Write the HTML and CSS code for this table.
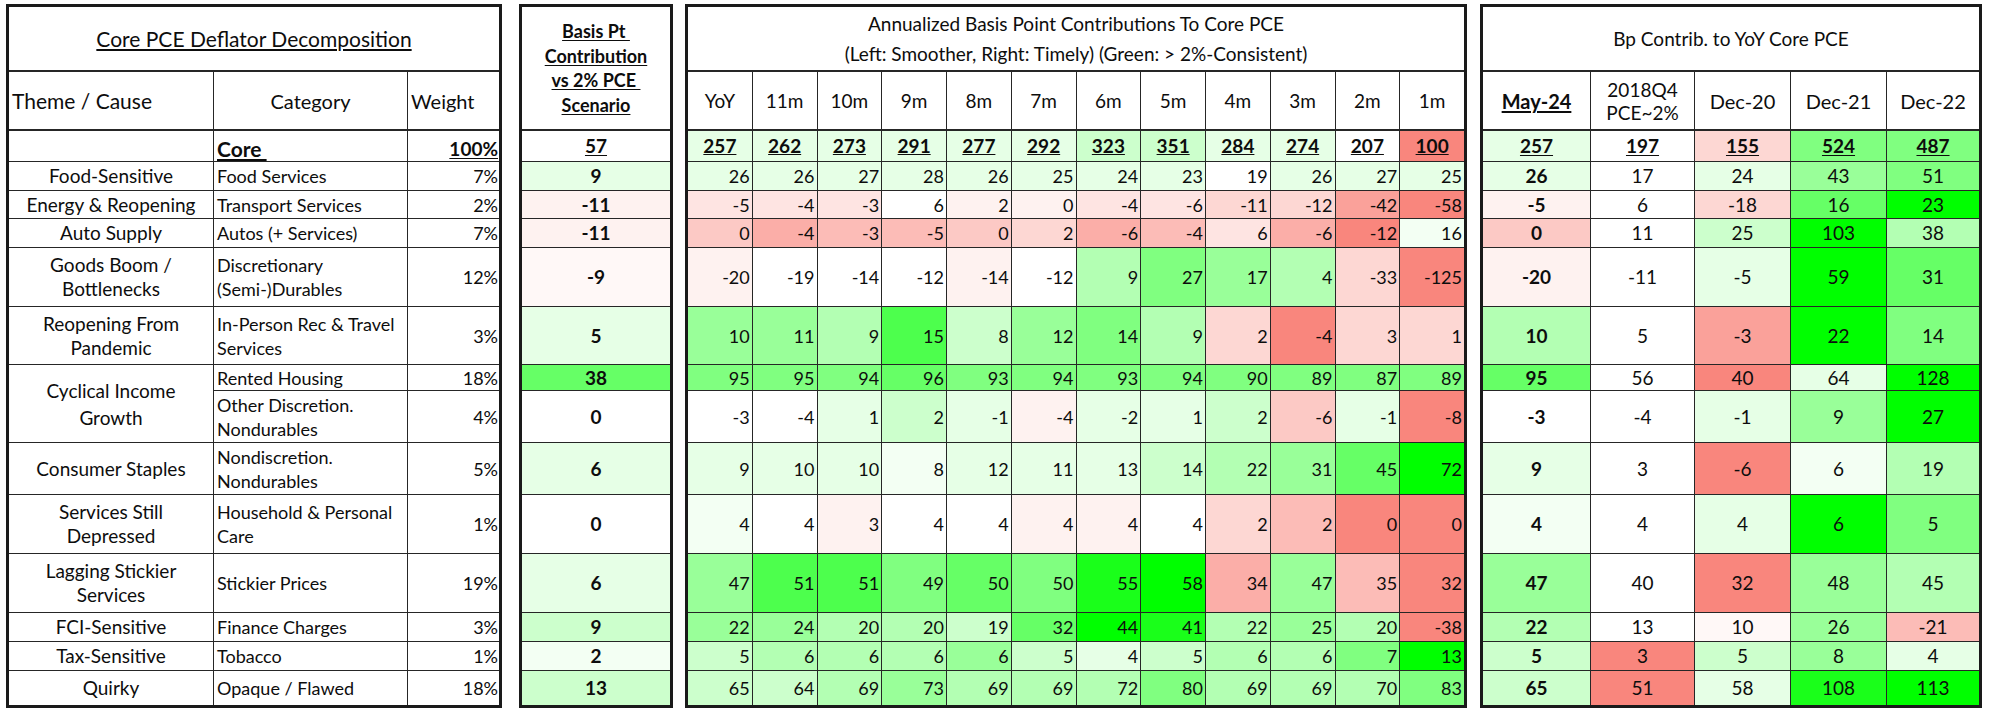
FILE: index.html
```html
<!DOCTYPE html>
<html lang="en">
<head>
<meta charset="utf-8">
<title>Core PCE Deflator Decomposition</title>
<link rel="stylesheet" href="styles.css">
</head>
<body>
<div class="page">

  <div class="t t1">
    <div class="ttl u">Core PCE Deflator Decomposition</div>
    <div class="hd lft big">Theme / Cause</div>
    <div class="hd ctr">Category</div>
    <div class="hd lft">Weight</div>

    <div></div>
    <div class="cat corecat"><span class="b u">Core&nbsp;</span></div>
    <div class="wt b u corewt">100%</div>

    <div class="th">Food-Sensitive</div><div class="cat">Food Services</div><div class="wt">7%</div>
    <div class="th">Energy &amp; Reopening</div><div class="cat">Transport Services</div><div class="wt">2%</div>
    <div class="th">Auto Supply</div><div class="cat">Autos (+ Services)</div><div class="wt">7%</div>
    <div class="th">Goods Boom /<br>Bottlenecks</div><div class="cat">Discretionary<br>(Semi-)Durables</div><div class="wt">12%</div>
    <div class="th">Reopening From<br>Pandemic</div><div class="cat">In-Person Rec &amp; Travel<br>Services</div><div class="wt">3%</div>
    <div class="th span2">Cyclical Income<br>Growth</div><div class="cat">Rented Housing</div><div class="wt">18%</div>
    <div class="cat">Other Discretion.<br>Nondurables</div><div class="wt">4%</div>
    <div class="th">Consumer Staples</div><div class="cat">Nondiscretion.<br>Nondurables</div><div class="wt">5%</div>
    <div class="th">Services Still<br>Depressed</div><div class="cat">Household &amp; Personal<br>Care</div><div class="wt">1%</div>
    <div class="th">Lagging Stickier<br>Services</div><div class="cat">Stickier Prices</div><div class="wt">19%</div>
    <div class="th">FCI-Sensitive</div><div class="cat">Finance Charges</div><div class="wt">3%</div>
    <div class="th">Tax-Sensitive</div><div class="cat">Tobacco</div><div class="wt">1%</div>
    <div class="th">Quirky</div><div class="cat">Opaque / Flawed</div><div class="wt">18%</div>
  </div>

  <div class="t t2">
    <div class="bphd b"><div class="stack"><span class="u">Basis Pt&nbsp;</span><br><span class="u">Contribution</span><br><span class="u">vs 2% PCE&nbsp;</span><br><span class="u">Scenario</span></div></div>
    <div class="bp u">57</div>
    <div class="bp g1">9</div>
    <div class="bp r1">-11</div>
    <div class="bp r1">-11</div>
    <div class="bp r0">-9</div>
    <div class="bp g1">5</div>
    <div class="bp g6">38</div>
    <div class="bp">0</div>
    <div class="bp g1">6</div>
    <div class="bp">0</div>
    <div class="bp g1">6</div>
    <div class="bp g2">9</div>
    <div class="bp g0">2</div>
    <div class="bp g2">13</div>
  </div>

  <div class="t t3">
    <div class="ttl3">Annualized Basis Point Contributions To Core PCE<br>(Left: Smoother, Right: Timely) (Green: &gt; 2%-Consistent)</div>
    <div class="hd ctr">YoY</div><div class="hd ctr">11m</div><div class="hd ctr">10m</div><div class="hd ctr">9m</div><div class="hd ctr">8m</div><div class="hd ctr">7m</div><div class="hd ctr">6m</div><div class="hd ctr">5m</div><div class="hd ctr">4m</div><div class="hd ctr">3m</div><div class="hd ctr">2m</div><div class="hd ctr">1m</div>

    <div class="cn g1"><span>257</span></div><div class="cn g1"><span>262</span></div><div class="cn g1"><span>273</span></div><div class="cn g1"><span>291</span></div><div class="cn g1"><span>277</span></div><div class="cn g1"><span>292</span></div><div class="cn g2"><span>323</span></div><div class="cn g2"><span>351</span></div><div class="cn g1"><span>284</span></div><div class="cn g1"><span>274</span></div><div class="cn"><span>207</span></div><div class="cn r9"><span>100</span></div>

    <div class="g1">26</div><div class="g1">26</div><div class="g1">27</div><div class="g1">28</div><div class="g1">26</div><div class="g1">25</div><div class="g1">24</div><div class="g1">23</div><div>19</div><div class="g1">26</div><div class="g1">27</div><div class="g1">25</div>

    <div class="r2">-5</div><div class="r2">-4</div><div class="r2">-3</div><div>6</div><div class="r1">2</div><div class="r1">0</div><div class="r2">-4</div><div class="r2">-6</div><div class="r3">-11</div><div class="r3">-12</div><div class="r7">-42</div><div class="r9">-58</div>

    <div class="r4">0</div><div class="r6">-4</div><div class="r5">-3</div><div class="r5">-5</div><div class="r4">0</div><div class="r3">2</div><div class="r6">-6</div><div class="r5">-4</div><div class="r2">6</div><div class="r6">-6</div><div class="r9">-12</div><div class="g0">16</div>

    <div class="r1">-20</div><div>-19</div><div>-14</div><div>-12</div><div class="r1">-14</div><div>-12</div><div class="g3">9</div><div class="g5">27</div><div class="g4">17</div><div class="g3">4</div><div class="r3">-33</div><div class="r9">-125</div>

    <div class="g4">10</div><div class="g4">11</div><div class="g3">9</div><div class="g7">15</div><div class="g2">8</div><div class="g4">12</div><div class="g5">14</div><div class="g3">9</div><div class="r3">2</div><div class="r9">-4</div><div class="r3">3</div><div class="r3">1</div>

    <div class="g5">95</div><div class="g5">95</div><div class="g5">94</div><div class="g6">96</div><div class="g5">93</div><div class="g5">94</div><div class="g5">93</div><div class="g5">94</div><div class="g5">90</div><div class="g5">89</div><div class="g5">87</div><div class="g5">89</div>

    <div>-3</div><div>-4</div><div class="g1">1</div><div class="g2">2</div><div class="g1">-1</div><div class="r1">-4</div><div class="g1">-2</div><div class="g1">1</div><div class="g2">2</div><div class="r4">-6</div><div class="g1">-1</div><div class="r9">-8</div>

    <div class="g1">9</div><div class="g1">10</div><div class="g1">10</div><div class="g0">8</div><div class="g1">12</div><div class="g1">11</div><div class="g1">13</div><div class="g2">14</div><div class="g3">22</div><div class="g4">31</div><div class="g6">45</div><div class="g10">72</div>

    <div class="g0">4</div><div>4</div><div class="r1">3</div><div>4</div><div>4</div><div class="r1">4</div><div class="r1">4</div><div>4</div><div class="r3">2</div><div class="r5">2</div><div class="r9">0</div><div class="r9">0</div>

    <div class="g4">47</div><div class="g7">51</div><div class="g7">51</div><div class="g5">49</div><div class="g6">50</div><div class="g5">50</div><div class="g9">55</div><div class="g10">58</div><div class="r6">34</div><div class="g4">47</div><div class="r5">35</div><div class="r9">32</div>

    <div class="g4">22</div><div class="g4">24</div><div class="g3">20</div><div class="g3">20</div><div class="g2">19</div><div class="g6">32</div><div class="g10">44</div><div class="g9">41</div><div class="g3">22</div><div class="g4">25</div><div class="g3">20</div><div class="r9">-38</div>

    <div class="g2">5</div><div class="g3">6</div><div class="g3">6</div><div class="g3">6</div><div class="g4">6</div><div class="g2">5</div><div class="g1">4</div><div class="g2">5</div><div class="g3">6</div><div class="g3">6</div><div class="g5">7</div><div class="g10">13</div>

    <div class="g2">65</div><div class="g2">64</div><div class="g3">69</div><div class="g4">73</div><div class="g3">69</div><div class="g3">69</div><div class="g3">72</div><div class="g5">80</div><div class="g3">69</div><div class="g3">69</div><div class="g3">70</div><div class="g5">83</div>
  </div>

  <div class="t t4">
    <div class="ttl4">Bp Contrib. to YoY Core PCE</div>
    <div class="hd ctr b"><span class="u">May-24</span></div>
    <div class="hd ctr two">2018Q4<br>PCE~2%</div>
    <div class="hd ctr">Dec-20</div>
    <div class="hd ctr">Dec-21</div>
    <div class="hd ctr">Dec-22</div>

    <div class="fb g1"><span class="u">257</span></div><div class="fb"><span class="u">197</span></div><div class="fb r3"><span class="u">155</span></div><div class="fb g5"><span class="u">524</span></div><div class="fb g5"><span class="u">487</span></div>

    <div class="b g1">26</div><div>17</div><div class="g1">24</div><div class="g4">43</div><div class="g5">51</div>
    <div class="b r1">-5</div><div>6</div><div class="r3">-18</div><div class="g6">16</div><div class="g10">23</div>
    <div class="b r4">0</div><div>11</div><div class="g2">25</div><div class="g10">103</div><div class="g3">38</div>
    <div class="b r1">-20</div><div>-11</div><div class="g1">-5</div><div class="g10">59</div><div class="g6">31</div>
    <div class="b g3">10</div><div>5</div><div class="r7">-3</div><div class="g10">22</div><div class="g5">14</div>
    <div class="b g6">95</div><div>56</div><div class="r9">40</div><div class="g1">64</div><div class="g10">128</div>
    <div class="b">-3</div><div>-4</div><div class="g1">-1</div><div class="g4">9</div><div class="g10">27</div>
    <div class="b g1">9</div><div>3</div><div class="r9">-6</div><div class="g0">6</div><div class="g3">19</div>
    <div class="b g0">4</div><div>4</div><div class="g1">4</div><div class="g10">6</div><div class="g5">5</div>
    <div class="b g4">47</div><div>40</div><div class="r9">32</div><div class="g4">48</div><div class="g3">45</div>
    <div class="b g3">22</div><div>13</div><div class="r0">10</div><div class="g4">26</div><div class="r5">-21</div>
    <div class="b g2">5</div><div class="r9">3</div><div class="g2">5</div><div class="g4">8</div><div class="g1">4</div>
    <div class="b g2">65</div><div class="r9">51</div><div class="g1">58</div><div class="g9">108</div><div class="g10">113</div>
  </div>

</div>
</body>
</html>
```

FILE: styles.css
```css
* { box-sizing: border-box; margin: 0; padding: 0; }

html, body {
  background: #ffffff;
  width: 2000px;
  height: 720px;
  overflow: hidden;
}

body {
  font-family: Lato, "Open Sans", "Liberation Sans", sans-serif;
  color: #0d0d0d;
  font-size: 18px;
}

.page {
  display: flex;
  align-items: flex-start;
  padding: 4px 0 0 6px;
}

.t {
  display: grid;
  border: 3px solid #1a1a1a;
  background: #262626;
  gap: 1px;
  grid-template-rows: 64px 58px 30px 28px 27px 28px 58px 57px 25px 51px 51px 58px 58px 28px 28px 34px;
}

.t > div {
  background: #fff;
  display: flex;
  align-items: center;
  white-space: nowrap;
  line-height: 24px;
}

.t1 { width: 496px; grid-template-columns: 204px 193px 91px; }
.t2 { width: 154px; margin-left: 17px; grid-template-columns: 148px; }
.t3 { width: 782px; margin-left: 12px; grid-template-columns: repeat(12, 1fr); }
.t4 { width: 502px; margin-left: 13px; grid-template-columns: 107px 103px 95px 95px 92px; }

/* title row (thicker rule underneath) */
.t > .ttl, .t > .ttl3, .t > .ttl4 {
  justify-content: center;
  text-align: center;
  border-bottom: 1px solid #262626;
}
.t > .ttl { grid-column: 1 / 4; font-size: 21px; }
.t > .ttl3 { grid-column: 1 / 13; font-size: 19px; line-height: 30px; }
.t > .ttl4 { grid-column: 1 / 6; font-size: 19px; }

.t > .hd {
  font-size: 20px;
  border-bottom: 1px solid #262626;
}
.t > .lft { justify-content: flex-start; padding-left: 3px; }
.t > .big { font-size: 21px; }
.t > .ctr { justify-content: center; text-align: center; }
.t > .two { font-size: 19px; line-height: 23px; }

.t > .th { justify-content: center; text-align: center; font-size: 19px; }
.t > .span2 { grid-row: span 2; line-height: 27px; }
.t > .cat { justify-content: flex-start; padding-left: 3px; font-size: 18px; }
.t > .wt { justify-content: flex-end; padding-right: 1px; font-size: 18px; }
.t > .corecat { align-items: flex-end; font-size: 21px; }
.t > .corewt { align-items: flex-end; font-size: 19px; }

/* basis point column */
.t > .bphd {
  grid-row: 1 / 3;
  justify-content: center;
  font-size: 18px;
  border-bottom: 1px solid #262626;
}
.stack { text-align: center; line-height: 24.5px; }
.t > .bp { justify-content: center; font-weight: 700; font-size: 19px; }

/* annualized contributions */
.t3 > div { justify-content: flex-end; padding-right: 2px; font-size: 18px; }
.t3 > .cn { justify-content: center; padding-right: 0; font-weight: 700; text-decoration: underline; font-size: 19px; }
.t3 > .hd { justify-content: center; padding-right: 0; font-size: 19px; }
.t3 > .ttl3 { justify-content: center; padding-right: 0; }

/* bp contrib yoy */
.t4 > div { justify-content: center; font-size: 19px; }
.t4 > .fb { font-weight: 700; }
.t4 > .hd { font-size: 20px; }
.t4 > .two { font-size: 19px; }

.b { font-weight: 700; }
.u { text-decoration: underline; text-underline-offset: 2px; }

/* colour scale: green (above 2% consistent) */
.t > .g0  { background: #f3fff3; }
.t > .g1  { background: #e6ffe6; }
.t > .g2  { background: #ccffcc; }
.t > .g3  { background: #b3ffb3; }
.t > .g4  { background: #99ff99; }
.t > .g5  { background: #80ff80; }
.t > .g6  { background: #66ff66; }
.t > .g7  { background: #4dff4d; }
.t > .g8  { background: #33ff33; }
.t > .g9  { background: #1aff1a; }
.t > .g10 { background: #00ff00; }

/* colour scale: red (below) */
.t > .r0 { background: #fff8f7; }
.t > .r1 { background: #fef2f0; }
.t > .r2 { background: #fee4e2; }
.t > .r3 { background: #fdd7d3; }
.t > .r4 { background: #fcc9c5; }
.t > .r5 { background: #fcbcb7; }
.t > .r6 { background: #fbaea8; }
.t > .r7 { background: #faa19a; }
.t > .r8 { background: #f9938b; }
.t > .r9 { background: #f9867d; }
```
